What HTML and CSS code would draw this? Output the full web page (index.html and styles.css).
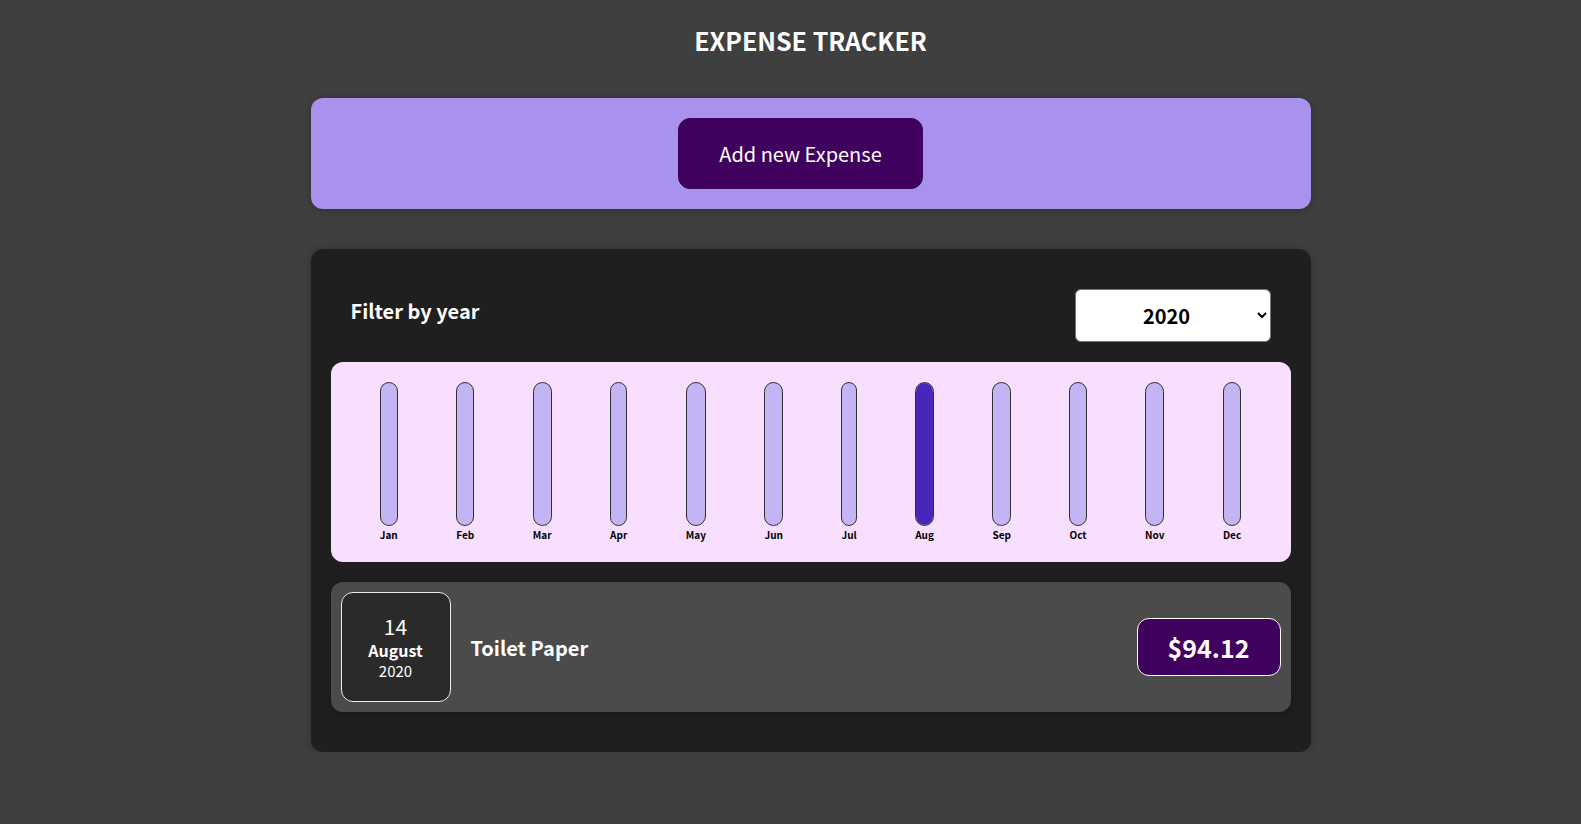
FILE: index.html
```html
<!DOCTYPE html>
<html lang="en">
<head>
<meta charset="utf-8">
<title>Expense Tracker</title>
<link rel="stylesheet" href="styles.css">
</head>
<body>
<header class="app-header"><h1 class="app-title">EXPENSE TRACKER</h1></header>
<section class="new-expense">
  <button class="new-expense__btn">Add new Expense</button>
</section>
<section class="expenses">
  <div class="filter">
    <label class="filter__label">Filter by year</label>
    <select class="filter__select">
      <option>2022</option>
      <option>2021</option>
      <option selected>2020</option>
      <option>2019</option>
    </select>
  </div>
  <div class="chart">
    <div class="bar"><div class="bar__inner"><div class="bar__fill" style="height:0%"></div></div><div class="bar__label">Jan</div></div>
    <div class="bar"><div class="bar__inner"><div class="bar__fill" style="height:0%"></div></div><div class="bar__label">Feb</div></div>
    <div class="bar"><div class="bar__inner"><div class="bar__fill" style="height:0%"></div></div><div class="bar__label">Mar</div></div>
    <div class="bar"><div class="bar__inner"><div class="bar__fill" style="height:0%"></div></div><div class="bar__label">Apr</div></div>
    <div class="bar"><div class="bar__inner"><div class="bar__fill" style="height:0%"></div></div><div class="bar__label">May</div></div>
    <div class="bar"><div class="bar__inner"><div class="bar__fill" style="height:0%"></div></div><div class="bar__label">Jun</div></div>
    <div class="bar"><div class="bar__inner"><div class="bar__fill" style="height:0%"></div></div><div class="bar__label">Jul</div></div>
    <div class="bar"><div class="bar__inner"><div class="bar__fill" style="height:100%"></div></div><div class="bar__label">Aug</div></div>
    <div class="bar"><div class="bar__inner"><div class="bar__fill" style="height:0%"></div></div><div class="bar__label">Sep</div></div>
    <div class="bar"><div class="bar__inner"><div class="bar__fill" style="height:0%"></div></div><div class="bar__label">Oct</div></div>
    <div class="bar"><div class="bar__inner"><div class="bar__fill" style="height:0%"></div></div><div class="bar__label">Nov</div></div>
    <div class="bar"><div class="bar__inner"><div class="bar__fill" style="height:0%"></div></div><div class="bar__label">Dec</div></div>
  </div>
  <div class="item">
    <div class="date">
      <div class="date__day">14</div>
      <div class="date__month">August</div>
      <div class="date__year">2020</div>
    </div>
    <h2 class="item__desc">Toilet Paper</h2>
    <div class="item__price">$94.12</div>
  </div>
</section>
</body>
</html>
```
FILE: styles.css
```css
* { box-sizing: border-box; }
html, body { margin: 0; padding: 0; }
body {
  background: #3f3f3f;
  font-family: "Noto Sans CJK JP", "Noto Sans", sans-serif;
  color: #fff;
  padding-left: 40px;
}
.app-header { padding-top: 20px; text-align: center; }
.app-title { margin: 0; font-size: 25px; line-height: 40px; font-weight: bold; color: #fff; }
.new-expense {
  width: 1000px;
  margin: 38px auto 40px;
  padding: 20px;
  background: #a892ee;
  border-radius: 12px;
  text-align: center;
  box-shadow: 0 1px 8px rgba(0,0,0,0.25);
}
.new-expense__btn {
  font: inherit;
  font-size: 20px;
  padding: 20px 40px;
  border: 1px solid #40005d;
  background: #40005d;
  color: #fff;
  border-radius: 12px;
  margin-right: 20px;
  cursor: pointer;
}
.expenses {
  width: 1000px;
  margin: 0 auto;
  padding: 20px;
  background: #1f1f1f;
  border-radius: 12px;
  box-shadow: 0 1px 8px rgba(0,0,0,0.25);
}
.filter {
  display: flex;
  align-items: center;
  justify-content: space-between;
  padding: 0 20px;
  margin: 20px 0;
}
.filter__label { font-weight: bold; font-size: 20px; margin-bottom: 10px; }
.filter__select {
  font: inherit;
  font-size: 20px;
  font-weight: bold;
  padding: 10px 60px;
  border-radius: 6px;
  border: 1px solid #767676;
  background: #fff;
  color: #000;
  width: 196px;
  text-align: center;
}
.chart {
  height: 200px;
  padding: 20px;
  border-radius: 12px;
  background: #f8dfff;
  display: flex;
  justify-content: space-around;
}
.bar {
  height: 100%;
  display: flex;
  flex-direction: column;
  align-items: center;
}
.bar__inner {
  flex: 1;
  width: 100%;
  border: 1px solid #313131;
  border-radius: 12px;
  background: #c3b4f3;
  overflow: hidden;
  display: flex;
  flex-direction: column;
  justify-content: flex-end;
}
.bar__fill { background: #4826b9; width: 100%; }
.bar__label {
  font-weight: bold;
  font-size: 10px;
  line-height: 14px;
  color: #000;
  text-align: center;
  margin-top: 2px;
}
.item {
  display: flex;
  align-items: center;
  padding: 10px;
  margin: 20px 0;
  border-radius: 12px;
  background: #4b4b4b;
  box-shadow: 0 2px 8px rgba(0,0,0,0.25);
}
.date {
  display: flex;
  flex-direction: column;
  align-items: center;
  justify-content: center;
  width: 110px;
  height: 110px;
  border: 1px solid #ececec;
  background: #2a2a2a;
  border-radius: 12px;
  color: #fff;
}
.date__day { font-size: 21px; line-height: 25px; }
.date__month { font-size: 16px; font-weight: bold; line-height: 22px; }
.date__year { font-size: 15px; line-height: 20px; }
.item__desc {
  flex: 1;
  margin: 0 20px;
  font-size: 20px;
  font-weight: bold;
  color: #fff;
}
.item__price {
  font-size: 25px;
  font-weight: bold;
  color: #fff;
  background: #40005d;
  border: 1px solid #fff;
  padding: 10px 30px;
  border-radius: 12px;
}
```
